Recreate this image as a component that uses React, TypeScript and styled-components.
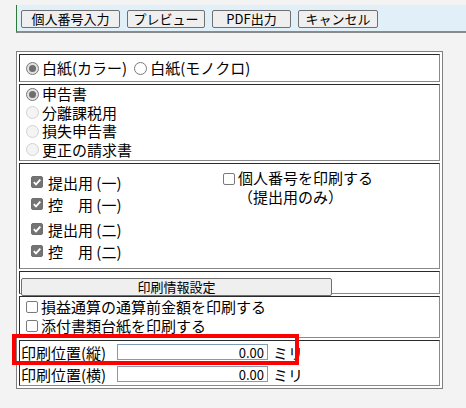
import React from "react";
import styled, { createGlobalStyle } from "styled-components";

const Global = createGlobalStyle`
  html, body { margin: 0; padding: 0; background: #f3f3f3; }
  body { font-family: "Noto Sans CJK JP", "Noto Sans", sans-serif; color: #000; }
  * { box-sizing: border-box; }
`;

const Page = styled.div`
  position: relative;
  width: 466px;
  height: 408px;
  overflow: hidden;
  padding-top: 5px;
`;

const ToolbarWrap = styled.div`
  padding-left: 16px;
`;

const Toolbar = styled.div`
  display: flex;
  gap: 7px;
  align-items: flex-start;
  height: 28px;
  padding: 5px 0 0 4px;
  background: #e1f0f8;
  border-left: 1px solid #2f7a3a;
  border-bottom: 2px solid #8a8a8a;
`;

const ToolButton = styled.button<{ $w: number }>`
  width: ${(p) => p.$w}px;
  height: 18px;
  padding: 0;
  font-family: inherit;
  font-size: 13px;
  line-height: 16px;
  color: #000;
  background: #efefef;
  border: 1px solid #707070;
  border-radius: 2px;
`;

const Outer = styled.div`
  margin: 18px 0 0 16px;
  width: 427px;
  border: 1px solid #808080;
  padding: 2px;
  background: #fff;
  display: flex;
  flex-direction: column;
  gap: 2px;
`;

const Panel = styled.div<{ $h: number }>`
  height: ${(p) => p.$h}px;
  background: #fff;
  border: 1px solid;
  border-color: #2a2a2a #8a8a8a #8a8a8a #2a2a2a;
`;

const RadioLine = styled(Panel)`
  display: flex;
  align-items: center;
  gap: 7px;
  padding-left: 6px;
`;

const ColumnPanel = styled(Panel)<{ $pl: number; $pt: number }>`
  display: flex;
  flex-direction: column;
  padding: ${(p) => p.$pt}px 0 0 ${(p) => p.$pl}px;
`;

const Option = styled.label<{ $gap?: number }>`
  display: flex;
  align-items: center;
  gap: ${(p) => p.$gap ?? 3}px;
  font-size: 15px;
  line-height: 18.5px;
  height: 18.5px;
  white-space: nowrap;
`;

const RadioMark = styled.span<{ $state: "on" | "off" | "disabled" }>`
  position: relative;
  flex: none;
  width: 13px;
  height: 13px;
  border-radius: 50%;
  border: 1px solid ${(p) => (p.$state === "disabled" ? "#d2d2d2" : "#7a7a7a")};
  background: ${(p) =>
    p.$state === "disabled" ? "#f4f4f4" : p.$state === "on" ? "#e2e2e2" : "#fff"};
  &::after {
    content: "";
    position: absolute;
    inset: 2px;
    border-radius: 50%;
    background: ${(p) => (p.$state === "on" ? "#6e6e6e" : "transparent")};
  }
`;

const BoxMark = styled.span<{ $on: boolean }>`
  flex: none;
  display: inline-flex;
  align-items: center;
  justify-content: center;
  width: 12px;
  height: 12px;
  border-radius: 2px;
  border: 1px solid ${(p) => (p.$on ? "#6e6e6e" : "#7a7a7a")};
  background: ${(p) => (p.$on ? "#747474" : "#fff")};
`;

const CheckGrid = styled(Panel)`
  display: grid;
  grid-template-columns: 192px 1fr;
  padding: 5px 0 0 11px;
`;

const CheckCol = styled.div`
  display: flex;
  flex-direction: column;
  padding-top: 2px;
`;

const CheckRow = styled.label<{ $extra?: number }>`
  display: flex;
  align-items: center;
  gap: 5px;
  height: 22px;
  margin-top: ${(p) => p.$extra ?? 0}px;
  font-size: 15px;
  white-space: nowrap;
`;

const Note = styled.label`
  display: flex;
  align-items: flex-start;
  gap: 3px;
  font-size: 15px;
  line-height: 18.5px;
  white-space: nowrap;
  & > span:first-child {
    margin-top: 4px;
  }
`;

const ButtonPanel = styled(Panel)`
  padding: 1px;
`;

const WideButton = styled(ToolButton)``;

const FieldPanel = styled(Panel)`
  display: flex;
  flex-direction: column;
  padding-left: 1px;
`;

const FieldRow = styled.div`
  display: flex;
  align-items: center;
  height: 22px;
  font-size: 15px;
  white-space: nowrap;
`;

const FieldLabel = styled.span`
  width: 96px;
  flex: none;
`;

const NumberInput = styled.input`
  width: 151px;
  height: 16px;
  padding: 0 3px 0 0;
  border: 1px solid #7f9db9;
  background: #fff;
  font-family: inherit;
  font-size: 13px;
  text-align: right;
  color: #000;
  outline: none;
`;

const Unit = styled.span`
  margin-left: 5px;
`;

const Highlight = styled.div`
  position: absolute;
  left: 12px;
  top: 334px;
  width: 287px;
  height: 31px;
  border: 4px solid #ff0000;
  pointer-events: none;
`;

const Check = ({ on }: { on: boolean }) => (
  <BoxMark $on={on}>
    {on && (
      <svg width="10" height="10" viewBox="0 0 10 10">
        <path d="M1.8 5.2 L4 7.4 L8.3 2.6" stroke="#fff" strokeWidth="1.8" fill="none" />
      </svg>
    )}
  </BoxMark>
);

export default function App() {
  return (
    <Page>
      <Global />
      <ToolbarWrap>
        <Toolbar>
          <ToolButton $w={99}>個人番号入力</ToolButton>
          <ToolButton $w={78}>プレビュー</ToolButton>
          <ToolButton $w={79}>PDF出力</ToolButton>
          <ToolButton $w={80}>キャンセル</ToolButton>
        </Toolbar>
      </ToolbarWrap>
      <Outer>
        <RadioLine $h={28}>
          <Option>
            <RadioMark $state="on" />
            白紙(カラー)
          </Option>
          <Option>
            <RadioMark $state="off" />
            白紙(モノクロ)
          </Option>
        </RadioLine>
        <ColumnPanel $h={77} $pl={6} $pt={0}>
          <Option>
            <RadioMark $state="on" />
            申告書
          </Option>
          <Option>
            <RadioMark $state="disabled" />
            分離課税用
          </Option>
          <Option>
            <RadioMark $state="disabled" />
            損失申告書
          </Option>
          <Option>
            <RadioMark $state="disabled" />
            更正の請求書
          </Option>
        </ColumnPanel>
        <CheckGrid $h={106}>
          <CheckCol>
            <CheckRow>
              <Check on />
              提出用 (一)
            </CheckRow>
            <CheckRow>
              <Check on />
              控　用 (一)
            </CheckRow>
            <CheckRow $extra={3}>
              <Check on />
              提出用 (二)
            </CheckRow>
            <CheckRow>
              <Check on />
              控　用 (二)
            </CheckRow>
          </CheckCol>
          <div>
            <Note>
              <Check on={false} />
              <span>
                個人番号を印刷する
                <br />
                （提出用のみ）
              </span>
            </Note>
          </div>
        </CheckGrid>
        <ButtonPanel $h={23}>
          <WideButton $w={311}>印刷情報設定</WideButton>
        </ButtonPanel>
        <ColumnPanel $h={42} $pl={6} $pt={1}>
          <Option>
            <Check on={false} />
            損益通算の通算前金額を印刷する
          </Option>
          <Option>
            <Check on={false} />
            添付書類台紙を印刷する
          </Option>
        </ColumnPanel>
        <FieldPanel $h={46}>
          <FieldRow>
            <FieldLabel>印刷位置(縦)</FieldLabel>
            <NumberInput readOnly value="0.00" />
            <Unit>ミリ</Unit>
          </FieldRow>
          <FieldRow>
            <FieldLabel>印刷位置(横)</FieldLabel>
            <NumberInput readOnly value="0.00" />
            <Unit>ミリ</Unit>
          </FieldRow>
        </FieldPanel>
      </Outer>
      <Highlight />
    </Page>
  );
}
